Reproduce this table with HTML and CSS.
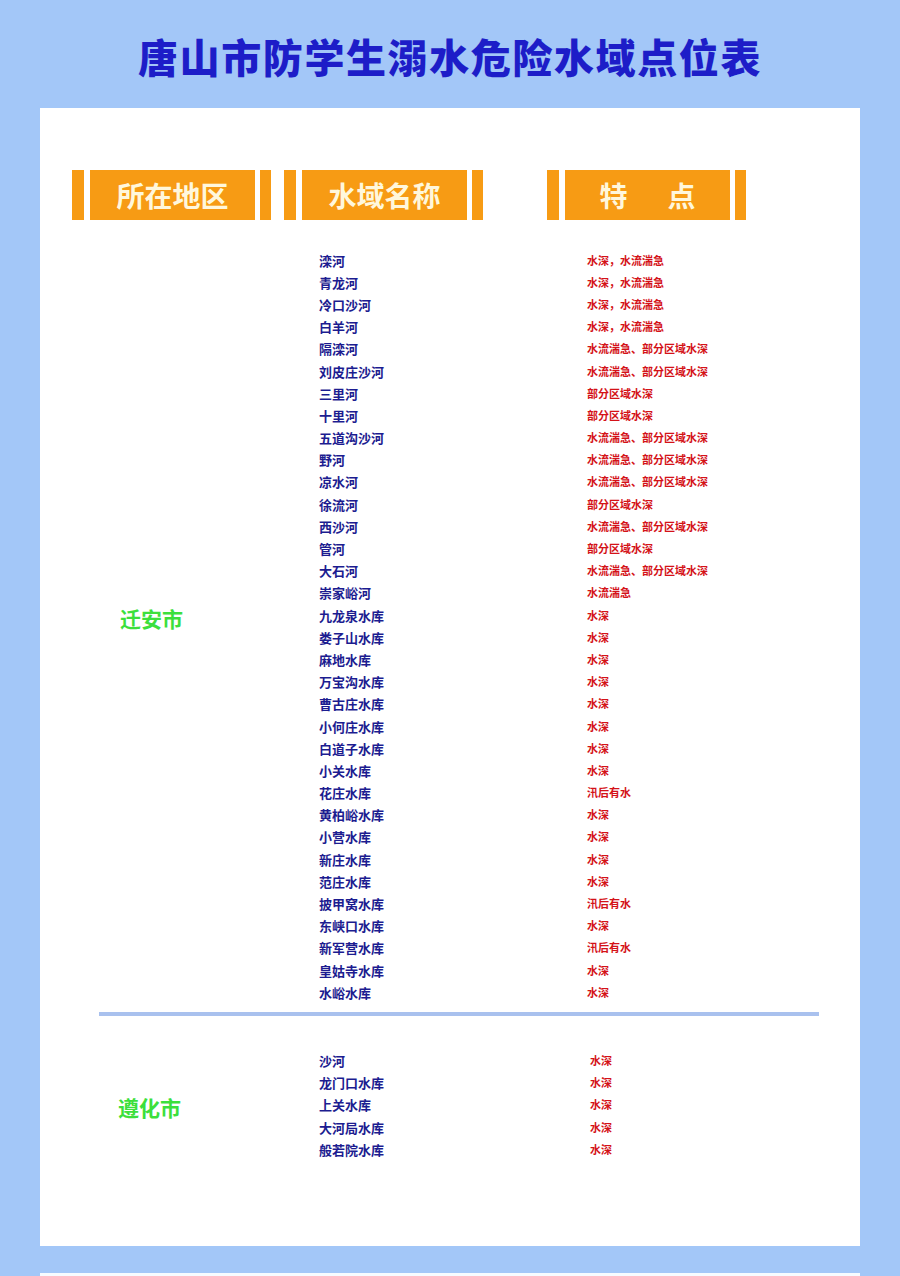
FILE: index.html
```html
<!DOCTYPE html>
<html lang="zh">
<head>
<meta charset="utf-8">
<title>唐山市防学生溺水危险水域点位表</title>
<link rel="stylesheet" href="styles.css">
</head>
<body>
<header class="top">
  <h1 class="title">唐山市防学生溺水危险水域点位表</h1>
</header>
<main class="panel">
  <div class="heads">
    <div class="hbox hbox-region"><span class="bar"></span><span class="hmain">所在地区</span><span class="bar bar-r"></span></div>
    <div class="hbox hbox-name"><span class="bar"></span><span class="hmain">水域名称</span><span class="bar bar-r"></span></div>
    <div class="hbox hbox-feat"><span class="bar"></span><span class="hmain hmain-wide">特　点</span><span class="bar bar-r"></span></div>
  </div>

  <section class="section section-1">
    <div class="region"><span class="region-name region-up">迁安市</span></div>
    <div class="rows">
      <div class="row"><span class="name">滦河</span><span class="feat">水深，水流湍急</span></div>
      <div class="row"><span class="name">青龙河</span><span class="feat">水深，水流湍急</span></div>
      <div class="row"><span class="name">冷口沙河</span><span class="feat">水深，水流湍急</span></div>
      <div class="row"><span class="name">白羊河</span><span class="feat">水深，水流湍急</span></div>
      <div class="row"><span class="name">隔滦河</span><span class="feat">水流湍急、部分区域水深</span></div>
      <div class="row"><span class="name">刘皮庄沙河</span><span class="feat">水流湍急、部分区域水深</span></div>
      <div class="row"><span class="name">三里河</span><span class="feat">部分区域水深</span></div>
      <div class="row"><span class="name">十里河</span><span class="feat">部分区域水深</span></div>
      <div class="row"><span class="name">五道沟沙河</span><span class="feat">水流湍急、部分区域水深</span></div>
      <div class="row"><span class="name">野河</span><span class="feat">水流湍急、部分区域水深</span></div>
      <div class="row"><span class="name">凉水河</span><span class="feat">水流湍急、部分区域水深</span></div>
      <div class="row"><span class="name">徐流河</span><span class="feat">部分区域水深</span></div>
      <div class="row"><span class="name">西沙河</span><span class="feat">水流湍急、部分区域水深</span></div>
      <div class="row"><span class="name">管河</span><span class="feat">部分区域水深</span></div>
      <div class="row"><span class="name">大石河</span><span class="feat">水流湍急、部分区域水深</span></div>
      <div class="row"><span class="name">崇家峪河</span><span class="feat">水流湍急</span></div>
      <div class="row"><span class="name">九龙泉水库</span><span class="feat">水深</span></div>
      <div class="row"><span class="name">娄子山水库</span><span class="feat">水深</span></div>
      <div class="row"><span class="name">麻地水库</span><span class="feat">水深</span></div>
      <div class="row"><span class="name">万宝沟水库</span><span class="feat">水深</span></div>
      <div class="row"><span class="name">曹古庄水库</span><span class="feat">水深</span></div>
      <div class="row"><span class="name">小何庄水库</span><span class="feat">水深</span></div>
      <div class="row"><span class="name">白道子水库</span><span class="feat">水深</span></div>
      <div class="row"><span class="name">小关水库</span><span class="feat">水深</span></div>
      <div class="row"><span class="name">花庄水库</span><span class="feat">汛后有水</span></div>
      <div class="row"><span class="name">黄柏峪水库</span><span class="feat">水深</span></div>
      <div class="row"><span class="name">小营水库</span><span class="feat">水深</span></div>
      <div class="row"><span class="name">新庄水库</span><span class="feat">水深</span></div>
      <div class="row"><span class="name">范庄水库</span><span class="feat">水深</span></div>
      <div class="row"><span class="name">披甲窝水库</span><span class="feat">汛后有水</span></div>
      <div class="row"><span class="name">东峡口水库</span><span class="feat">水深</span></div>
      <div class="row"><span class="name">新军营水库</span><span class="feat">汛后有水</span></div>
      <div class="row"><span class="name">皇姑寺水库</span><span class="feat">水深</span></div>
      <div class="row"><span class="name">水峪水库</span><span class="feat">水深</span></div>
    </div>
  </section>

  <hr class="divider">

  <section class="section section-2">
    <div class="region"><span class="region-name region-2">遵化市</span></div>
    <div class="rows">
      <div class="row"><span class="name">沙河</span><span class="feat feat-2">水深</span></div>
      <div class="row"><span class="name">龙门口水库</span><span class="feat feat-2">水深</span></div>
      <div class="row"><span class="name">上关水库</span><span class="feat feat-2">水深</span></div>
      <div class="row"><span class="name">大河局水库</span><span class="feat feat-2">水深</span></div>
      <div class="row"><span class="name">般若院水库</span><span class="feat feat-2">水深</span></div>
    </div>
  </section>
</main>
<div class="panel-next"></div>
</body>
</html>
```

FILE: styles.css
```css
html, body {
  margin: 0;
  padding: 0;
}

body {
  background: #a3c7f8;
  font-family: "Noto Sans CJK SC", "Liberation Sans", sans-serif;
  width: 900px;
  height: 1276px;
  overflow: hidden;
}

.top {
  height: 108px;
  display: flex;
  align-items: center;
  justify-content: center;
}

.title {
  margin: 4px 0 0 0;
  font-size: 40px;
  font-weight: 900;
  letter-spacing: 1.6px;
  color: #1d1dc8;
  line-height: 1;
}

.panel {
  display: block;
  margin: 0 40px;
  height: 1138px;
  box-sizing: border-box;
  padding-top: 62px;
  background: #ffffff;
}

.heads {
  display: flex;
  height: 50px;
  padding-left: 32px;
}

.hbox {
  display: flex;
  height: 50px;
}

.hbox-name {
  margin-left: 13px;
}

.hbox-feat {
  margin-left: 64px;
}

.bar {
  width: 12px;
  background: #f79b14;
}

.bar-r {
  width: 11px;
  margin-left: 5px;
}

.hmain {
  width: 165px;
  margin-left: 6px;
  background: #f79b14;
  color: #fff7dc;
  font-size: 28px;
  font-weight: 700;
  display: flex;
  align-items: center;
  justify-content: center;
  line-height: 1;
}

.hmain-wide {
  letter-spacing: 6px;
  padding-left: 6px;
  box-sizing: border-box;
}

.section {
  display: flex;
}

.section-1 {
  margin-top: 29px;
}

.section-2 {
  margin-top: 33px;
}

.region {
  width: 279px;
  display: flex;
  align-items: center;
}

.region-name {
  font-size: 21px;
  font-weight: 700;
  color: #3cdf3c;
  line-height: 1;
  margin-left: 80px;
}

.region-up {
  margin-bottom: 16px;
}

.region-2 {
  margin-left: 78px;
  margin-top: 6px;
}

.rows {
  display: flex;
  flex-direction: column;
}

.row {
  height: 22.2px;
  display: flex;
  align-items: center;
}

.name {
  width: 268px;
  font-size: 13px;
  font-weight: 700;
  color: #1c1c90;
  line-height: 1;
}

.feat {
  font-size: 11px;
  font-weight: 700;
  color: #d41218;
  line-height: 1;
}

.feat-2 {
  margin-left: 3px;
}

.divider {
  margin: 9px 0 0 59px;
  width: 720px;
  height: 4px;
  border: 0;
  background: #a9c1ee;
}

.panel-next {
  margin: 27px 40px 0;
  height: 3px;
  background: #f6fbff;
}
```
